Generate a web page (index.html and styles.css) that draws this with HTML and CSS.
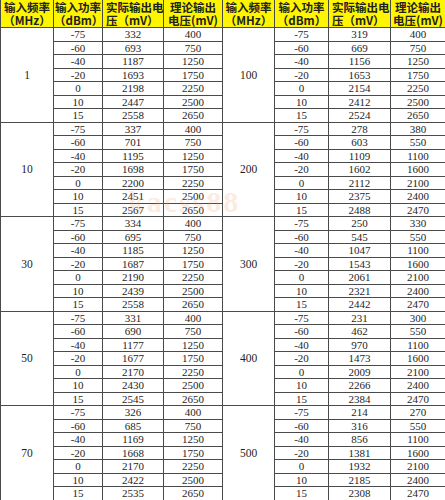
FILE: index.html
```html
<!DOCTYPE html>
<html lang="zh">
<head>
<meta charset="utf-8">
<title>输入频率与输出电压</title>
<link rel="stylesheet" href="styles.css">
</head>
<body>
<div class="wrap">
<table class="data">
<colgroup>
<col class="c1"><col class="c2"><col class="c3"><col class="c4">
<col class="c5"><col class="c6"><col class="c7"><col class="c8">
</colgroup>
<thead>
<tr>
<th class="ctr">输入频率<br>（MHz）</th>
<th class="ctr">输入功率<br>（dBm）</th>
<th class="lft">实际输出电<br>压（mV）</th>
<th class="ctr">理论输出<br>电压(mV)</th>
<th class="ctr">输入频率<br>（MHz）</th>
<th class="ctr">输入功率<br>（dBm）</th>
<th class="lft">实际输出电<br>压（mV）</th>
<th class="ctr">理论输出<br>电压(mV)</th>
</tr>
</thead>
<tbody>
<tr class="gs"><td rowspan="7" class="freq">1</td><td>-75</td><td>332</td><td>400</td><td rowspan="7" class="freq">100</td><td>-75</td><td>319</td><td>400</td></tr>
<tr><td>-60</td><td>693</td><td>750</td><td>-60</td><td>669</td><td>750</td></tr>
<tr><td>-40</td><td>1187</td><td>1250</td><td>-40</td><td>1156</td><td>1250</td></tr>
<tr><td>-20</td><td>1693</td><td>1750</td><td>-20</td><td>1653</td><td>1750</td></tr>
<tr><td>0</td><td>2198</td><td>2250</td><td>0</td><td>2154</td><td>2250</td></tr>
<tr><td>10</td><td>2447</td><td>2500</td><td>10</td><td>2412</td><td>2500</td></tr>
<tr><td>15</td><td>2558</td><td>2650</td><td>15</td><td>2524</td><td>2650</td></tr>

<tr class="gs"><td rowspan="7" class="freq">10</td><td>-75</td><td>337</td><td>400</td><td rowspan="7" class="freq">200</td><td>-75</td><td>278</td><td>380</td></tr>
<tr><td>-60</td><td>701</td><td>750</td><td>-60</td><td>603</td><td>550</td></tr>
<tr><td>-40</td><td>1195</td><td>1250</td><td>-40</td><td>1109</td><td>1100</td></tr>
<tr><td>-20</td><td>1698</td><td>1750</td><td>-20</td><td>1602</td><td>1600</td></tr>
<tr><td>0</td><td>2200</td><td>2250</td><td>0</td><td>2112</td><td>2100</td></tr>
<tr><td>10</td><td>2451</td><td>2500</td><td>10</td><td>2375</td><td>2400</td></tr>
<tr><td>15</td><td>2567</td><td>2650</td><td>15</td><td>2488</td><td>2470</td></tr>

<tr class="gs"><td rowspan="7" class="freq">30</td><td>-75</td><td>334</td><td>400</td><td rowspan="7" class="freq">300</td><td>-75</td><td>250</td><td>330</td></tr>
<tr><td>-60</td><td>695</td><td>750</td><td>-60</td><td>545</td><td>550</td></tr>
<tr><td>-40</td><td>1185</td><td>1250</td><td>-40</td><td>1047</td><td>1100</td></tr>
<tr><td>-20</td><td>1687</td><td>1750</td><td>-20</td><td>1543</td><td>1600</td></tr>
<tr><td>0</td><td>2190</td><td>2250</td><td>0</td><td>2061</td><td>2100</td></tr>
<tr><td>10</td><td>2439</td><td>2500</td><td>10</td><td>2321</td><td>2400</td></tr>
<tr><td>15</td><td>2558</td><td>2650</td><td>15</td><td>2442</td><td>2470</td></tr>

<tr class="gs"><td rowspan="7" class="freq">50</td><td>-75</td><td>331</td><td>400</td><td rowspan="7" class="freq">400</td><td>-75</td><td>231</td><td>300</td></tr>
<tr><td>-60</td><td>690</td><td>750</td><td>-60</td><td>462</td><td>550</td></tr>
<tr><td>-40</td><td>1177</td><td>1250</td><td>-40</td><td>970</td><td>1100</td></tr>
<tr><td>-20</td><td>1677</td><td>1750</td><td>-20</td><td>1473</td><td>1600</td></tr>
<tr><td>0</td><td>2170</td><td>2250</td><td>0</td><td>2009</td><td>2100</td></tr>
<tr><td>10</td><td>2430</td><td>2500</td><td>10</td><td>2266</td><td>2400</td></tr>
<tr><td>15</td><td>2545</td><td>2650</td><td>15</td><td>2384</td><td>2470</td></tr>

<tr class="gs"><td rowspan="7" class="freq">70</td><td>-75</td><td>326</td><td>400</td><td rowspan="7" class="freq">500</td><td>-75</td><td>214</td><td>270</td></tr>
<tr><td>-60</td><td>685</td><td>750</td><td>-60</td><td>316</td><td>550</td></tr>
<tr><td>-40</td><td>1169</td><td>1250</td><td>-40</td><td>856</td><td>1100</td></tr>
<tr><td>-20</td><td>1668</td><td>1750</td><td>-20</td><td>1381</td><td>1600</td></tr>
<tr><td>0</td><td>2170</td><td>2250</td><td>0</td><td>1932</td><td>2100</td></tr>
<tr><td>10</td><td>2422</td><td>2500</td><td>10</td><td>2185</td><td>2400</td></tr>
<tr><td>15</td><td>2535</td><td>2650</td><td>15</td><td>2308</td><td>2470</td></tr>
</tbody>
</table>
<span class="watermark">kacss88</span>
</div>
</body>
</html>
```
FILE: styles.css
```css
html, body {
  margin: 0;
  padding: 0;
  background: #ffffff;
}
.wrap {
  position: relative;
  width: 445px;
  height: 500px;
  overflow: hidden;
}
.data {
  width: 445px;
  table-layout: fixed;
  border-collapse: collapse;
  font-family: "Liberation Serif", "Noto Sans CJK SC", serif;
  font-size: 11px;
  color: #1e1e1e;
}
.c1 { width: 53px; }
.c2 { width: 49px; }
.c3 { width: 61px; }
.c4 { width: 59px; }
.c5 { width: 52px; }
.c6 { width: 54px; }
.c7 { width: 62px; }
.c8 { width: 55px; }
.data th {
  height: 27px;
  padding: 0;
  background: #fff500;
  font-family: "Noto Sans CJK SC", sans-serif;
  font-weight: 700;
  font-size: 11.5px;
  line-height: 13px;
  color: #222222;
  white-space: nowrap;
  overflow: hidden;
  border-left: 1px solid #4a4a4a;
  border-right: 1px solid #4a4a4a;
  border-bottom: 1px solid #4a4a4a;
  vertical-align: middle;
}
.data th.ctr { text-align: center; }
.data th.lft { text-align: left; padding-left: 3px; }
.data td {
  height: 12.5px;
  padding: 0;
  line-height: 12px;
  text-align: center;
  vertical-align: middle;
  border: 1px solid #4a4a4a;
}
.data td.freq {
  font-size: 11.5px;
}
.watermark {
  position: absolute;
  left: 128px;
  top: 185px;
  font-family: "Liberation Serif", serif;
  font-size: 30px;
  font-weight: 700;
  letter-spacing: 2px;
  color: rgba(235, 150, 90, 0.2);
  pointer-events: none;
}
```
